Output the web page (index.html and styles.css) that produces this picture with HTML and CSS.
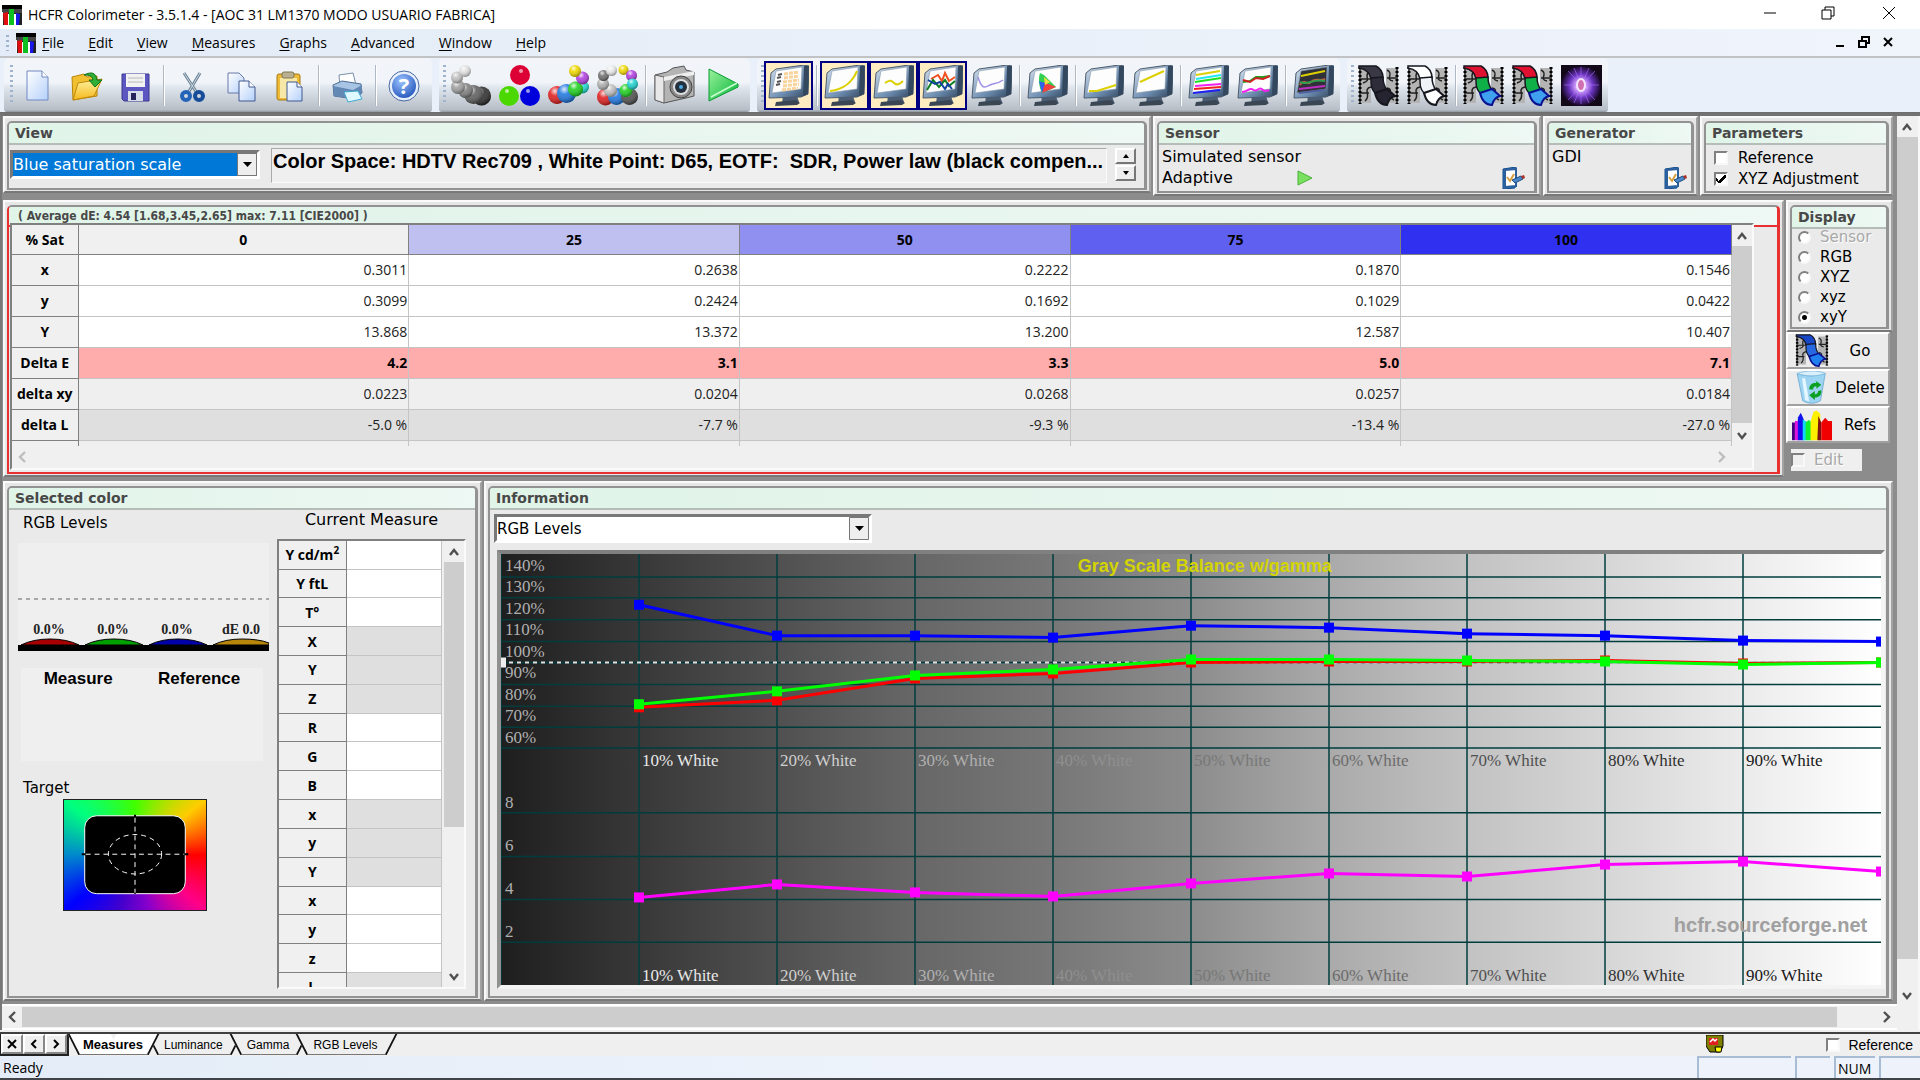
FILE: index.html
```html
<!DOCTYPE html>
<html lang="en">
<head>
<meta charset="utf-8">
<title>HCFR Colorimeter - 3.5.1.4</title>
<link rel="stylesheet" href="styles.css">
</head>
<body>
<svg class="defs" aria-hidden="true">
  <defs>
    <linearGradient id="g-bezel" x1="0" y1="0" x2="1" y2="1"><stop offset="0" stop-color="#dbe6f2"/><stop offset=".6" stop-color="#6f8fb3"/><stop offset="1" stop-color="#2c4159"/></linearGradient>
    <linearGradient id="g-paper" x1="0" y1="0" x2="1" y2="1"><stop offset="0" stop-color="#fff"/><stop offset="1" stop-color="#b4d0fa"/></linearGradient>
    <linearGradient id="g-folder" x1="0" y1="0" x2="0" y2="1"><stop offset="0" stop-color="#fff3a0"/><stop offset="1" stop-color="#f5b81c"/></linearGradient>
    <linearGradient id="g-green" x1="0" y1="0" x2="1" y2="1"><stop offset="0" stop-color="#9af29a"/><stop offset="1" stop-color="#05b53a"/></linearGradient>
    <radialGradient id="g-help" cx=".4" cy=".3" r=".8"><stop offset="0" stop-color="#9cc4ff"/><stop offset="1" stop-color="#1d4fb8"/></radialGradient>
    <radialGradient id="g-shine" cx=".38" cy=".28" r=".7"><stop offset="0" stop-color="#fff" stop-opacity=".85"/><stop offset=".4" stop-color="#fff" stop-opacity=".1"/><stop offset="1" stop-color="#000" stop-opacity=".35"/></radialGradient>
    <radialGradient id="g-nova"><stop offset="0" stop-color="#fff"/><stop offset=".25" stop-color="#d8a8ff"/><stop offset=".6" stop-color="#6a34c0"/><stop offset="1" stop-color="#160824"/></radialGradient>
    <symbol id="logo" viewBox="0 0 20 20"><path fill="#000" d="M0 0h20v8H0z"/><path fill="#444" d="M0 4h20v4H0z"/><path fill="#222" d="M0 8h20v12H0z"/><path fill="#fff" d="M0 7h1v13H0zM6 9h1v11H6zM12 9h2v11h-2z"/><path fill="#e01010" d="M1 8l5-1v13H2z"/><path fill="#10c020" d="M7 4h5v16H7z"/><path fill="#1818e8" d="M14 8l4 1-1 11h-3z"/></symbol>
    <symbol id="ball" viewBox="0 0 20 20"><circle cx="10" cy="10" r="10" fill="currentColor"/><circle cx="10" cy="10" r="10" fill="url(#g-shine)"/></symbol>
    <symbol id="monitor" viewBox="0 0 41 41">
      <path d="M15 31h14l2 6-17 1z" fill="#4b5e75"/><path d="M8 37l20-2 4 3-3 2-22 1z" fill="#3a4654"/>
      <path d="M8 4L36 0l5 1-1 28-7 3-32 1L3 8z" fill="url(#g-bezel)" stroke="#4e5c6c" stroke-width="1"/>
      <path d="M36 1l5 0-1 28-5 2z" fill="#33485f"/>
      <path d="M8 6l26-4-1 22-29 4z" fill="var(--screen,#fdfdfd)" stroke="#8899aa" stroke-width=".6"/>
    </symbol>
    <symbol id="film" viewBox="0 0 41 41">
      <path d="M1 3h12v35H1zM28 3h12v35H28z" fill="#b4b4b4"/>
      <path d="M2 2v37M39 2v37M12 6c-8 5 3 9-7 12M13 22c-9 2 1 9-6 14M29 5c8 4-3 9 6 11M29 23c8 1-2 8 7 12M3 14h9M3 28h8M29 13h9M30 31h8" stroke="#222" stroke-width="1.5" fill="none"/>
      <path d="M2 2v37M39 2v37" stroke="#000" stroke-width="3" stroke-dasharray="2 2"/>
      <path d="M1 1h17c6 3 7 7 7 12l-12 1C12 7 7 4 1 3z" fill="var(--a)" stroke="#16161e" stroke-width="1.5"/>
      <path d="M13 13l12-1c0 6 1 9 4 13l-12 3c-4-4-4-8-4-15z" fill="var(--b)" stroke="#16161e" stroke-width="1.5"/>
      <path d="M17 28l12-4 8 7c-4 1-7 5-8 9-6 0-10-4-12-12z" fill="var(--c)" stroke="var(--edge,#16161e)" stroke-width="2"/>
    </symbol>
    <symbol id="edit-page" viewBox="0 0 24 22"><path d="M2 2l13-2v4h-9l-1 13 9 1v3L2 22z" fill="#2d74c4" stroke="#174a86"/><path d="M4 3l11-1v17L4 20z" fill="#fff" stroke="#2d5f9c" stroke-width="2"/><path d="M6 10l3 4 4-7" stroke="#d8a040" stroke-width="2" fill="none"/><path d="M11 13l9-4 2 3-8 4z" fill="#4b86c8" stroke="#204c80"/><path d="M20 9l3-1 1 3-2 1z" fill="#b03020"/></symbol>
    <symbol id="up" viewBox="0 0 12 12"><path d="M2 9l4-5 4 5" fill="none" stroke="currentColor" stroke-width="2.4"/></symbol>
    <symbol id="down" viewBox="0 0 12 12"><path d="M2 3l4 5 4-5" fill="none" stroke="currentColor" stroke-width="2.4"/></symbol>
    <symbol id="left" viewBox="0 0 12 12"><path d="M9 1L4 6l5 5" fill="none" stroke="currentColor" stroke-width="2.4"/></symbol>
    <symbol id="right" viewBox="0 0 12 12"><path d="M3 1l5 5-5 5" fill="none" stroke="currentColor" stroke-width="2.4"/></symbol>
  </defs>
</svg>

<header class="titlebar">
  <svg class="logo"><use href="#logo"/></svg>
  <h1>HCFR Colorimeter - 3.5.1.4 - [AOC 31 LM1370 MODO USUARIO FABRICA]</h1>
  <div class="window-buttons">
    <button aria-label="Minimize"><svg viewBox="0 0 14 14"><path d="M1 7h12"/></svg></button>
    <button aria-label="Restore"><svg viewBox="0 0 14 14"><path d="M1 4h9v9H1zM4 4V1h9v9h-3"/></svg></button>
    <button aria-label="Close"><svg viewBox="0 0 14 14"><path d="M1 1l12 12M13 1L1 13"/></svg></button>
  </div>
</header>

<nav class="menubar">
  <span class="grip"></span>
  <svg class="logo"><use href="#logo"/></svg>
  <button><u>F</u>ile</button><button><u>E</u>dit</button><button><u>V</u>iew</button><button><u>M</u>easures</button><button><u>G</u>raphs</button><button><u>A</u>dvanced</button><button><u>W</u>indow</button><button><u>H</u>elp</button>
  <div class="document-buttons">
    <button aria-label="Minimize document"><svg viewBox="0 0 12 12"><path d="M2 10h8"/></svg></button>
    <button aria-label="Restore document"><svg viewBox="0 0 12 12"><path d="M1 5h7v6H1zM4 4V1h7v6H9"/></svg></button>
    <button aria-label="Close document"><svg viewBox="0 0 12 12"><path d="M2 2l8 8M10 2l-8 8"/></svg></button>
  </div>
</nav>

<div class="toolbar">
  <div class="band">
    <span class="grip"></span>
    <button aria-label="New"><svg viewBox="0 0 41 41"><path d="M10 6h15l6 6v23H10z" fill="url(#g-paper)" stroke="#7088c0"/><path d="M25 6v6h6" fill="#fff" stroke="#7088c0"/></svg></button>
    <button aria-label="Open"><svg viewBox="0 0 41 41"><path d="M6 12l12-3 3 3 10-1v20L7 35z" fill="#f0c030" stroke="#b88408"/><path d="M7 35l5-17 24-4-8 17z" fill="url(#g-folder)" stroke="#c08808"/><path d="M18 10c8-4 12-2 13 5h5l-7 7-6-7h4c-1-4-3-5-9-5z" fill="#2fae38" stroke="#127018"/></svg></button>
    <button aria-label="Save"><svg viewBox="0 0 41 41"><path d="M7 9h27v27H9l-2-2z" fill="#5b56c0" stroke="#3c3890"/><path d="M11 9h19v13H11z" fill="#f2f2f2"/><path d="M13 13h15M13 17h15" stroke="#b8b8b8"/><path d="M13 26h15v10H13z" fill="#d8dce8"/><path d="M16 28h5v7h-5z" fill="#27245c"/></svg></button>
    <span class="sep"></span>
    <button aria-label="Cut"><svg viewBox="0 0 41 41"><path d="M12 8l13 20M28 8L16 28" stroke="#6e8496" stroke-width="3"/><path d="M12 8l13 20M28 8L16 28" stroke="#c8d8e4" stroke-width="1"/><ellipse cx="14" cy="31" rx="4" ry="4" fill="none" stroke="#2464b8" stroke-width="4"/><ellipse cx="27" cy="31" rx="4" ry="4" fill="none" stroke="#174c98" stroke-width="4"/></svg></button>
    <button aria-label="Copy"><svg viewBox="0 0 41 41"><path d="M7 8h11l5 5v15H7z" fill="url(#g-paper)" stroke="#6878a8"/><path d="M18 16h10l6 6v14H18z" fill="url(#g-paper)" stroke="#405890"/><path d="M28 16v6h6" fill="#fff" stroke="#405890"/></svg></button>
    <button aria-label="Paste"><svg viewBox="0 0 41 41"><rect x="7" y="9" width="23" height="26" rx="2" fill="#eebc38" stroke="#a87810"/><path d="M10 13h17v20H10z" fill="#f8e8a8"/><rect x="12" y="7" width="12" height="6" rx="2" fill="#b8b090" stroke="#807850"/><path d="M17 17h10l5 5v14H17z" fill="url(#g-paper)" stroke="#405890"/><path d="M27 17v5h5" fill="#fff" stroke="#405890"/></svg></button>
    <span class="sep"></span>
    <button aria-label="Print"><svg viewBox="0 0 41 41"><path d="M12 10l14-2 3 12-16 2z" fill="#fff" stroke="#7890a8"/><path d="M6 20l9-4 19 3 1 9-8 6-20-3z" fill="#a8c4e4" stroke="#4c6c94"/><path d="M6 21l20 4 9-5v8l-8 6-20-3z" fill="#6488b4"/><path d="M17 27l14-1 4 8-14 3z" fill="#e0f8ff" stroke="#40a8d0"/></svg></button>
    <span class="sep"></span>
    <button aria-label="Help"><svg viewBox="0 0 41 41"><circle cx="20" cy="21" r="15" fill="#e8f0fc" stroke="#4868a0"/><circle cx="20" cy="21" r="12" fill="url(#g-help)"/><text x="20" y="29" class="help-mark">?</text></svg></button>
  </div>
  <div class="band">
    <span class="grip"></span>
    <button aria-label="Measure gray scale"><svg viewBox="0 0 41 41"><g color="#303030"><use href="#ball" x="22" y="21" width="19" height="20"/></g><g color="#606060"><use href="#ball" x="14" y="20" width="19" height="19"/></g><g color="#808080"><use href="#ball" x="8" y="18" width="15" height="15"/></g><g color="#a0a0a0"><use href="#ball" x="1" y="15" width="14" height="14"/></g><g color="#c0c0c0"><use href="#ball" x="1" y="6" width="12" height="13"/></g><g color="#e0e0e0"><use href="#ball" x="9" y="0" width="12" height="12"/></g></svg></button>
    <button aria-label="Measure primaries"><svg viewBox="0 0 41 41"><circle cx="21" cy="10" r="10" fill="#dc0034"/><circle cx="10" cy="31" r="10" fill="#4ad800"/><circle cx="31" cy="31" r="10" fill="#0000dc"/><g fill="#fff" opacity=".6"><circle cx="22" cy="6" r="2"/><circle cx="8" cy="26" r="2"/><circle cx="29" cy="26" r="2"/></g></svg></button>
    <button aria-label="Measure secondaries"><svg viewBox="0 0 41 41"><g color="#e02020"><use href="#ball" x="0" y="20" width="18" height="20"/></g><g color="#2078e0"><use href="#ball" x="9" y="19" width="19" height="19"/></g><g color="#20d8d0"><use href="#ball" x="28" y="15" width="13" height="14"/></g><g color="#20d020"><use href="#ball" x="20" y="16" width="15" height="16"/></g><g color="#b040e0"><use href="#ball" x="28" y="6" width="13" height="14"/></g><g color="#f0d800"><use href="#ball" x="21" y="0" width="12" height="12"/></g></svg></button>
    <button aria-label="Measure all"><svg viewBox="0 0 41 41"><g color="#e02020"><use href="#ball" x="0" y="23" width="17" height="18"/></g><g color="#2078e0"><use href="#ball" x="11" y="23" width="17" height="17"/></g><g color="#505050"><use href="#ball" x="24" y="22" width="17" height="19"/></g><g color="#c0c0c0"><use href="#ball" x="7" y="19" width="13" height="13"/></g><g color="#20d020"><use href="#ball" x="22" y="19" width="14" height="13"/></g><g color="#b0b0b0"><use href="#ball" x="0" y="13" width="12" height="12"/></g><g color="#707070"><use href="#ball" x="1" y="5" width="11" height="11"/></g><g color="#e8e8e8"><use href="#ball" x="9" y="0" width="11" height="11"/></g><g color="#f0d800"><use href="#ball" x="21" y="0" width="11" height="10"/></g><g color="#b040e0"><use href="#ball" x="29" y="5" width="11" height="11"/></g><g color="#20d0d0"><use href="#ball" x="30" y="13" width="11" height="12"/></g></svg></button>
    <span class="sep"></span>
    <button aria-label="Single measure"><svg viewBox="0 0 41 41"><path d="M1 10l12-3 6-4 11-2 2 4 8 2v24l-8 2-22 5-9-3z" fill="#b4b4b4" stroke="#555"/><path d="M1 10l9 2v26l-9-3z" fill="#e8e8e8" stroke="#666"/><path d="M10 12l30-6v4l-30 6z" fill="#eee"/><circle cx="27" cy="22" r="11" fill="#888" stroke="#444"/><circle cx="27" cy="22" r="8" fill="#ddd"/><circle cx="27" cy="22" r="6" fill="#23303e"/><circle cx="27" cy="22" r="2" fill="#4aa8e8"/></svg></button>
    <button aria-label="Continuous measure"><svg viewBox="0 0 41 41"><path d="M6 4l29 15v3L6 36z" fill="url(#g-green)" stroke="#0a9a34"/><path d="M8 32l26-14" stroke="#c8ffd0" stroke-width="1.5"/></svg></button>
  </div>
  <div class="band">
    <span class="grip"></span>
    <button class="pressed" aria-label="Measures view"><svg viewBox="0 0 41 41"><use href="#monitor"/><path d="M10 10l4-1M9 13l4-1M9 17l4-1M8 20l4-1" stroke="#555" stroke-width="2"/><path d="M16 9l15-2M16 13l15-2M15 17l16-2M15 21l16-2M14 25l16-2" stroke="#f8d49c" stroke-width="3" stroke-dasharray="4 1"/></svg></button>
    <span class="sep"></span>
    <button class="pressed" aria-label="Luminance"><svg viewBox="0 0 41 41"><use href="#monitor"/><path d="M6 26c14-2 22-8 27-20" class="trace yellow"/></svg></button>
    <button class="pressed" aria-label="Gamma"><svg viewBox="0 0 41 41"><use href="#monitor"/><path d="M12 18c5-4 7-2 9 0s5 2 9-2" class="trace yellow"/></svg></button>
    <button class="pressed" aria-label="RGB levels"><svg viewBox="0 0 41 41"><use href="#monitor"/><path d="M9 14l7-4 4 6 3-8 4 8 6-4" class="trace" stroke="#f05020"/><path d="M5 25l6-10 6 7 6-7 4 6 6-5" class="trace" stroke="#108020"/><path d="M6 15l7 4 5-2 5 7 3-5 4 5" class="trace" stroke="#1040a0"/></svg></button>
    <button aria-label="Color temperature"><svg viewBox="0 0 41 41"><use href="#monitor"/><path d="M7 12c4 14 8 10 12 8s8-1 13-5" stroke="#a090e8" fill="none" stroke-width="1.5"/></svg></button>
    <span class="sep"></span>
    <button aria-label="CIE chart"><svg viewBox="0 0 41 41"><use href="#monitor"/><path d="M13 8l4 2 12 12-14 6c-3-6-4-14-2-20z" fill="#30d050"/><path d="M17 17l12 5-14 6z" fill="#f04040"/><path d="M12 16l6 2-3 10z" fill="#3060f0"/><path d="M17 12l6 5-5 3z" fill="#f0e040"/></svg></button>
    <span class="sep"></span>
    <button aria-label="Near black"><svg viewBox="0 0 41 41"><use href="#monitor"/><path d="M6 26h8l19-6" class="trace yellow"/></svg></button>
    <button aria-label="Near white"><svg viewBox="0 0 41 41"><use href="#monitor"/><path d="M8 17l24-11" class="trace yellow"/></svg></button>
    <span class="sep"></span>
    <button aria-label="Saturation luminance"><svg viewBox="0 0 41 41"><use href="#monitor"/><path d="M8 10l24-4" class="trace yellow"/><path d="M8 14l25-4" class="trace" stroke="#20e8f0"/><path d="M7 17l26-4" class="trace" stroke="#20e020"/><path d="M7 21l26-2" class="trace" stroke="#f020f0"/><path d="M6 24l27-2" class="trace" stroke="#f02020"/><path d="M5 28l27-3" class="trace" stroke="#2020f0"/></svg></button>
    <button aria-label="Saturation shift"><svg viewBox="0 0 41 41"><use href="#monitor"/><path d="M6 17l7-1 6-4h7l7-1" class="trace" stroke="#20a020"/><path d="M6 15l7 2 6-4 7 1 7-3" class="trace" stroke="#d02020"/><path d="M5 27c5 0 6-3 9-3s3 3 6 1 4-2 6 0 4 1 6 0" class="trace" stroke="#f020f0"/></svg></button>
    <span class="sep"></span>
    <button aria-label="Combined measures"><svg viewBox="0 0 41 41" class="dark-screen"><use href="#monitor"/><path d="M8 11l24-5" class="trace yellow"/><path d="M7 20c5-8 7 2 11-3s8 0 14-3" class="trace" stroke="#c06040"/><path d="M7 17c8 4 12-4 25-1" class="trace" stroke="#30a050"/><path d="M6 24l26-3" class="trace" stroke="#c030c0"/><path d="M6 28l25-3" class="trace" stroke="#5060a0"/></svg></button>
  </div>
  <div class="band">
    <span class="grip"></span>
    <button aria-label="Black film"><svg class="film-dark"><use href="#film"/></svg></button>
    <button aria-label="White film"><svg class="film-white"><use href="#film"/></svg></button>
    <span class="sep"></span>
    <button aria-label="Color film"><svg class="film-color"><use href="#film"/></svg></button>
    <button aria-label="Color film reference"><svg class="film-color"><use href="#film"/></svg></button>
    <button aria-label="Full screen"><svg viewBox="0 0 41 41"><path fill="#120818" d="M0 0h41v41H0z"/><circle cx="20" cy="21" r="20" fill="url(#g-nova)"/><path d="M20 2v37M3 20h35M7 6l27 29M34 6L7 35M13 3l15 35M28 3L13 38" stroke="#b070ff" stroke-width="1" opacity=".6"/><ellipse cx="20" cy="20" rx="4" ry="6" fill="#d070b0" stroke="#f4e4ff" stroke-width="2"/></svg></button>
  </div>
</div>

<main class="workspace">
  <div class="panes">
    <div class="row">
      <section class="panel view-panel"><div class="group">
        <h2>View</h2>
        <div class="view-body">
          <select class="combo selected" aria-label="View"><option>Blue saturation scale</option></select>
          <p class="summary">Color Space: HDTV Rec709 , White Point: D65, EOTF: &nbsp;SDR, Power law (black compen...</p>
          <div class="spin"><button aria-label="Previous"><svg viewBox="0 0 8 6"><path d="M4 1l3 4H1z"/></svg></button><button aria-label="Next"><svg viewBox="0 0 8 6"><path d="M4 5l3-4H1z"/></svg></button></div>
        </div>
      </div></section>
      <section class="panel sensor-panel"><div class="group">
        <h2>Sensor</h2>
        <div class="device-body">
          <p>Simulated sensor</p>
          <div class="device-line"><span class="mode">Adaptive</span><svg class="run" viewBox="0 0 16 16"><path d="M1 1l14 7-14 7z"/></svg><button aria-label="Configure sensor"><svg class="page"><use href="#edit-page"/></svg></button></div>
        </div>
      </div></section>
      <section class="panel generator-panel"><div class="group">
        <h2>Generator</h2>
        <div class="device-body">
          <p>GDI</p>
          <div class="device-line"><button aria-label="Configure generator"><svg class="page"><use href="#edit-page"/></svg></button></div>
        </div>
      </div></section>
      <section class="panel parameters-panel"><div class="group">
        <h2>Parameters</h2>
        <div class="checks">
          <label><input type="checkbox"><span>Reference</span></label>
          <label><input type="checkbox" checked><span>XYZ Adjustment</span></label>
        </div>
      </div></section>
    </div>

    <div class="row">
      <section class="panel data-panel"><div class="group">
        <h2>( Average dE: 4.54 [1.68,3.45,2.65] max: 7.11 [CIE2000] )</h2>
        <div class="grid-box">
          <div class="grid-view">
            <div class="grid-clip">
            <table class="data">
              <thead><tr><th scope="col">% Sat</th><th scope="col">0</th><th scope="col" class="s25">25</th><th scope="col" class="s50">50</th><th scope="col" class="s75">75</th><th scope="col" class="s100">100</th></tr></thead>
              <tbody>
                <tr><th scope="row">x</th><td>0.3011</td><td>0.2638</td><td>0.2222</td><td>0.1870</td><td>0.1546</td></tr>
                <tr><th scope="row">y</th><td>0.3099</td><td>0.2424</td><td>0.1692</td><td>0.1029</td><td>0.0422</td></tr>
                <tr><th scope="row">Y</th><td>13.868</td><td>13.372</td><td>13.200</td><td>12.587</td><td>10.407</td></tr>
                <tr class="delta-e"><th scope="row">Delta E</th><td>4.2</td><td>3.1</td><td>3.3</td><td>5.0</td><td>7.1</td></tr>
                <tr class="light"><th scope="row">delta xy</th><td>0.0223</td><td>0.0204</td><td>0.0268</td><td>0.0257</td><td>0.0184</td></tr>
                <tr class="shade"><th scope="row">delta L</th><td>-5.0 %</td><td>-7.7 %</td><td>-9.3 %</td><td>-13.4 %</td><td>-27.0 %</td></tr>
                <tr class="light"><th></th><td></td><td></td><td></td><td></td><td></td></tr>
              </tbody>
            </table>
            </div>
            <div class="vscroll"><button aria-label="Scroll up"><svg><use href="#up"/></svg></button><span class="thumb"></span><button aria-label="Scroll down"><svg><use href="#down"/></svg></button></div>
          </div>
          <div class="hscroll idle"><button aria-label="Scroll left"><svg><use href="#left"/></svg></button><span class="track"></span><button aria-label="Scroll right"><svg><use href="#right"/></svg></button></div>
        </div>
      </div></section>
      <aside class="side">
        <section class="panel display-panel"><div class="group">
          <h2>Display</h2>
          <div class="radios">
            <label class="disabled"><input type="radio" name="display" disabled><span>Sensor</span></label>
            <label><input type="radio" name="display"><span>RGB</span></label>
            <label><input type="radio" name="display"><span>XYZ</span></label>
            <label><input type="radio" name="display"><span>xyz</span></label>
            <label><input type="radio" name="display" checked><span>xyY</span></label>
          </div>
        </div></section>
        <button class="action"><svg class="film-blue"><use href="#film"/></svg><span>Go</span></button>
        <button class="action"><svg viewBox="0 0 41 41"><path d="M2 3c10 4 22 4 35 0l-6 34c-7 4-15 4-22 0z" fill="#9cd4f2" stroke="#68a8d0"/><path d="M2 3c12-4 26-4 35 0-10 4-24 4-35 0z" fill="#d8f0fc" stroke="#7cb8dc"/><path d="M8 9l4 27 5 2L12 9z" fill="#e4f6ff"/><path d="M17 23c0-6 4-9 9-8l-1-3 7 5-6 5v-3c-3 0-4 1-4 4zM32 24c1 6-3 9-8 9v3l-7-6 7-5v4c3 0 4-2 4-4z" fill="#0ca020"/></svg><span>Delete</span></button>
        <button class="action"><svg viewBox="0 0 41 41" preserveAspectRatio="none"><path d="M0 18h3v22H0z" fill="#400080"/><path d="M3 16h4v24H3z" fill="#e010e0"/><path d="M6 12l3-6 3 8v26H6z" fill="#1010f0"/><path d="M11 14l4 3v23h-4z" fill="#10d8f0"/><path d="M14 18l3-3 3 2v23h-6z" fill="#10f030"/><path d="M19 17l3-12 3-2 4 4v33H19z" fill="#fff000"/><path d="M27 10l3 8v22h-4z" fill="#801010"/><path d="M30 18l4-6 3 4h4v24H30z" fill="#f00000"/></svg><span>Refs</span></button>
        <label class="edit"><input type="checkbox" disabled><span>Edit</span></label>
      </aside>
    </div>

    <div class="row grow">
      <section class="panel color-panel"><div class="group">
        <h2>Selected color</h2>
        <div class="color-body">
          <div class="color-left">
            <h3>RGB Levels</h3>
            <svg class="levels" viewBox="0 0 251 108">
              <path d="M0 56h251" stroke="#a8a8a8" stroke-width="2" stroke-dasharray="4 4"/>
              <g stroke="#000"><path d="M3 102q12-6 29-6t29 6z" fill="#a80000"/><path d="M67 102q12-6 29-6t29 6z" fill="#00a000"/><path d="M131 102q12-6 29-6t29 6z" fill="#0000a8"/><path d="M195 102q12-6 29-6t27 4v2z" fill="#b8860b"/></g>
              <path d="M0 102h251v6H0z"/>
              <text x="31" y="91">0.0%</text><text x="95" y="91">0.0%</text><text x="159" y="91">0.0%</text><text x="223" y="91">dE 0.0</text>
            </svg>
            <div class="compare"><strong>Measure</strong><strong>Reference</strong></div>
            <h3 class="target-title">Target</h3>
            <div class="target"><svg viewBox="0 0 144 111"><rect x="21" y="16" width="102" height="79" rx="12" fill="#000" stroke="#fff" stroke-width="1"/><path d="M18 55h108M72 15v80" stroke="#000" stroke-width="2"/><path d="M22 55h100M72 18v76" stroke="#fff" stroke-dasharray="5 4"/><ellipse cx="72" cy="55" rx="27" ry="20" fill="none" stroke="#fff" stroke-dasharray="5 4"/></svg></div>
          </div>
          <div class="color-right">
            <h3>Current Measure</h3>
            <div class="measure-box">
              <table class="measure">
                <tr><th scope="row">Y cd/m<sup>2</sup></th><td></td></tr><tr><th scope="row">Y ftL</th><td></td></tr><tr><th scope="row">T°</th><td></td></tr>
                <tr class="shade"><th scope="row">X</th><td></td></tr><tr class="shade"><th scope="row">Y</th><td></td></tr><tr class="shade"><th scope="row">Z</th><td></td></tr>
                <tr><th scope="row">R</th><td></td></tr><tr><th scope="row">G</th><td></td></tr><tr><th scope="row">B</th><td></td></tr>
                <tr class="shade"><th scope="row">x</th><td></td></tr><tr class="shade"><th scope="row">y</th><td></td></tr><tr class="shade"><th scope="row">Y</th><td></td></tr>
                <tr><th scope="row">x</th><td></td></tr><tr><th scope="row">y</th><td></td></tr><tr><th scope="row">z</th><td></td></tr>
                <tr class="shade"><th scope="row">L</th><td></td></tr>
              </table>
              <div class="vscroll measure-scroll"><button aria-label="Scroll up"><svg><use href="#up"/></svg></button><span class="thumb"></span><button aria-label="Scroll down"><svg><use href="#down"/></svg></button></div>
            </div>
          </div>
        </div>
      </div></section>
      <section class="panel info-panel"><div class="group">
        <h2>Information</h2>
        <div class="info-body">
          <select class="combo info-combo" aria-label="Information"><option>RGB Levels</option></select>
          <div class="chart"><svg id="chart" role="img" aria-label="Gray Scale Balance w/gamma"></svg></div>
        </div>
      </div></section>
    </div>
    <div class="hscroll main-hscroll"><button aria-label="Scroll left"><svg><use href="#left"/></svg></button><span class="thumb"></span><button aria-label="Scroll right"><svg><use href="#right"/></svg></button></div>
  </div>
  <div class="vscroll main-vscroll"><button aria-label="Scroll up"><svg><use href="#up"/></svg></button><span class="thumb"></span><button aria-label="Scroll down"><svg><use href="#down"/></svg></button></div>
</main>

<div class="tabbar">
  <div class="tab-nav"><button aria-label="Close tab"><svg viewBox="0 0 12 12"><path d="M2 2l8 8M10 2l-8 8"/></svg></button><button aria-label="Previous tab"><svg viewBox="0 0 12 12"><path d="M8 2L4 6l4 4"/></svg></button><button aria-label="Next tab"><svg viewBox="0 0 12 12"><path d="M4 2l4 4-4 4"/></svg></button></div>
  <div class="tabs">
    <button class="tab active"><span>Measures</span></button><button class="tab"><span>Luminance</span></button><button class="tab"><span>Gamma</span></button><button class="tab"><span>RGB Levels</span></button>
  </div>
  <svg class="plug" viewBox="0 0 18 18"><path d="M0 0h17v11l-3 6H4l-4-6z" fill="#808000" stroke="#000"/><path d="M3 3h9v7H3z" fill="#e02020"/><path d="M4 7l3-3 2 2 2-2" stroke="#fff" fill="none" stroke-width="1.5"/><path d="M9 12h7l-1 5h-5z" fill="#ffff00" stroke="#000"/></svg>
  <label class="tab-check"><input type="checkbox"><span>Reference</span></label>
</div>
<footer class="statusbar"><span class="ready">Ready</span><span class="cell wide"></span><span class="cell small"></span><span class="cell num">NUM</span><span class="cell num"></span></footer>
<script src="script.js"></script>
</body>
</html>
```
FILE: styles.css
```css
* { box-sizing: border-box; }

body {
  margin: 0;
  min-height: 100vh;
  display: flex;
  flex-direction: column;
  background: #efefef;
  color: #000;
  font-family: "Open Sans", "Noto Sans", sans-serif;
  font-size: 14px;
}

h1, h2, h3, p { margin: 0; font-weight: normal; }
button { padding: 0; border: 0; background: none; color: inherit; font: inherit; }
.defs { position: absolute; width: 0; height: 0; }

/* Title bar and menu */
.titlebar { display: flex; align-items: center; height: 29px; padding-left: 2px; background: #fff; }
.titlebar h1 { margin-left: 6px; font-size: 14px; }
.logo { width: 20px; height: 20px; }
.window-buttons { display: flex; margin-left: auto; }
.window-buttons button { width: 58px; height: 28px; }
.window-buttons button:last-child { width: 63px; }
.window-buttons svg { width: 14px; height: 14px; fill: none; stroke: #000; }
.menubar { display: flex; align-items: center; height: 29px; padding-left: 6px; background: linear-gradient(90deg, #e3ecf7, #f0f4fb); border-bottom: 2px solid #c0c2c4; }
.menubar > button { margin-right: 24px; }
.menubar .logo { margin: 0 6px 0 7px; }
.menubar u { text-underline-offset: 2px; }
.document-buttons { display: flex; margin-left: auto; padding-right: 20px; }
.document-buttons button { width: 24px; height: 24px; }
.document-buttons svg { width: 12px; height: 12px; fill: none; stroke: #000; stroke-width: 2; }
.grip { width: 3px; height: 16px; background: repeating-linear-gradient(#9fb4cc 0 2px, transparent 2px 5px); }

/* Toolbar */
.toolbar { display: flex; gap: 7px; height: 55px; padding-left: 4px; background: #e9f0fa; border-bottom: 1px solid #6e6e6e; }
.band { display: flex; align-items: center; padding: 0 2px 0 4px; border-radius: 5px 5px 3px 3px; background: linear-gradient(#f1f5fa 0 45%, #dfe5ec 55%, #b7bec7 96%, #8f979f); }
.band:first-child { padding: 0 3px 0 6px; }
.band .grip { height: 40px; }
.band button { display: flex; align-items: center; justify-content: center; width: 49px; height: 49px; }
.band svg { width: 41px; height: 41px; }
.band .sep { width: 2px; height: 41px; margin: 0 3px; background: linear-gradient(90deg, #b0b8c4 50%, #fff 50%); }
.band:nth-child(n+3) .sep { margin: 0 2px 0 3px; }
.band .pressed { border: 2px solid #000080; background: #ffecc0; }
.help-mark { font: bold 22px "Open Sans", sans-serif; fill: #fff; text-anchor: middle; }
.trace { fill: none; stroke-width: 2; }
.yellow { stroke: #dcd000; }
.dark-screen { --screen: #303038; }
.film-dark { --a: #3a3844; --b: #2e2c38; --c: #262430; }
.film-white { --a: #fff; --b: #f0f4f8; --c: #fff; }
.film-color { --a: #e01030; --b: #10b048; --c: #40a0f0; --edge: #0a1090; }
.film-blue { --a: #1848c8; --b: #2868e0; --c: #2080f0; --edge: #0a1090; }

/* Workspace */
.workspace { flex: 1; display: flex; background: #8c8c8c; border-top: 3px solid #727272; border-left: 2px solid #787878; }
.panes { flex: 1; display: flex; flex-direction: column; gap: 4px; min-width: 0; }
.row { display: flex; gap: 2px; padding: 0 4px 0 1px; }
.grow { flex: 1; }
.panel { display: flex; padding: 3px 2px 1px; background: #e6e6e6; border: 2px solid #fafafa; border-right-color: #a2a2a2; border-bottom-color: #787878; }
.group { flex: 1; display: flex; flex-direction: column; min-width: 0; background: #eaeaea; border: 2px solid #929292; border-right-width: 3px; border-radius: 5px 5px 0 0; }
h2 { height: 22px; padding: 0 6px; border-bottom: 2px solid #b6bcb8; border-radius: 3px 3px 0 0; background: linear-gradient(90deg, #e0f4e8, #eef8f4); color: #484848; font: bold 14px/21px "DejaVu Sans", sans-serif; }
h3, .device-body, .combo, .checks, .radios, .action, .edit { font-family: "DejaVu Sans", sans-serif; }

/* Top row */
.view-panel { flex: 1; height: 77px; min-width: 0; }
.sensor-panel { width: 388px; }
.generator-panel { width: 155px; }
.parameters-panel { width: 193px; }
.view-body { display: flex; align-items: flex-start; padding: 3px 8px 0 1px; }
.combo { width: 250px; height: 29px; padding: 0; border: 3px solid; border-color: #787878 #fff #fff #787878; border-radius: 0; background: #fff; font-size: 16px; appearance: none; }
.combo { background: url("data:image/svg+xml,%3Csvg xmlns='http://www.w3.org/2000/svg' width='20' height='23'%3E%3Cpath fill='%23eee' stroke='%23777' d='M.5.5h19v22H.5z'/%3E%3Cpath d='M6 9h9l-4.500 5z'/%3E%3C/svg%3E") right center no-repeat #fff; }
.combo.selected { margin-top: 2px; background-color: #0078d7; color: #fff; }
.summary { flex: 1; height: 35px; min-width: 0; margin: 0 8px 0 11px; padding-left: 1px; overflow: hidden; white-space: nowrap; border: 1px solid #fafafa; border-top-color: #aaa; border-left-color: #aaa; background: #efefef; font: bold 20px/24px "Liberation Sans", Arial, sans-serif; }
.spin { display: flex; flex-direction: column; gap: 1px; }
.spin button { display: flex; align-items: center; justify-content: center; width: 21px; height: 16px; border: 2px solid; border-color: #fff #777 #777 #fff; background: #eee; }
.spin svg { width: 8px; height: 6px; }
.device-body { flex: 1; display: flex; flex-direction: column; padding: 2px 9px 0 3px; font-size: 16px; line-height: 20px; }
.generator-panel .device-body { padding-right: 4px; }
.device-line { display: flex; align-items: center; height: 22px; }
.device-line button { margin-left: auto; height: 22px; }
.mode { width: 135px; }
.run { width: 16px; height: 16px; fill: #7ae060; stroke: #48b038; }
.page { width: 24px; height: 22px; }
.checks { display: flex; flex-direction: column; padding: 2px 8px; font-size: 15px; }
label { display: flex; align-items: center; }
.checks label { height: 21px; gap: 10px; }
input { margin: 0; flex: none; appearance: none; width: 14px; height: 14px; background: #fff; border: 2px solid; border-color: #808080 #f8f8f8 #f8f8f8 #808080; }
input[type="checkbox"]:checked { background: linear-gradient(45deg, transparent 30%, #000 30% 50%, transparent 50%) 0 4px / 5px 5px no-repeat, linear-gradient(-45deg, transparent 36%, #000 36% 62%, transparent 62%) 2px 1px / 8px 8px no-repeat, #fff; }

/* Data grid */
.data-panel { flex: 1; height: 277px; min-width: 0; }
.data-panel .group { border-color: #929292 #e83030 #e83030; }
.data-panel h2 { border-bottom-color: #e83030; padding-left: 9px; font: bold 12px/18px "DejaVu Sans Condensed", "DejaVu Sans", sans-serif; }
.grid-box { flex: 1; display: flex; flex-direction: column; margin: -4px 23px 3px 1px; border: 2px solid; border-color: #808080 #fafafa #fafafa #808080; background: #efefef; }
.grid-view { display: flex; height: 221px; }
.grid-clip { flex: 1; height: 221px; overflow: hidden; }
table { border-collapse: collapse; }
.data { width: 100%; table-layout: fixed; }
.data th, .data td { padding: 0 1px; border: 1px solid #c4c4c4; border-left: 0; text-align: right; }
.data tr > th { background: #f0f0f0; border-color: #808080; border-top: 0; text-align: center; }
.data tr > th:first-child { width: 66px; }
.data tr { height: 31px; }
.data thead tr { height: 29px; }
.data td { background: #fff; color: #222; }
.data .s25 { background: #c0c0f0; }
.data .s50 { background: #9090f0; }
.data .s75 { background: #6060f0; }
.data .s100 { background: #3030f0; }
.data .delta-e td { background: #ffacac; font-weight: bold; color: #000; }
.data .light td { background: #efefef; }
.data .shade td, .measure .shade td { background: #dfdfdf; }

/* Scroll bars */
.vscroll { display: flex; flex-direction: column; width: 20px; background: #f0f0f0; }
.vscroll .thumb { flex: 1; margin-bottom: 2px; background: #cdcdcd; }
.vscroll button, .hscroll button { display: flex; align-items: center; justify-content: center; width: 20px; height: 21px; color: #505050; }
.vscroll svg, .hscroll svg { width: 12px; height: 12px; }
.hscroll { display: flex; align-items: center; height: 22px; background: #f0f0f0; }
.hscroll .track { flex: 1; }
.idle button { color: #bdbdbd; }
.idle { padding-right: 20px; }
.main-hscroll { height: 26px; border-top: 2px solid #fff; border-bottom: 2px solid #fff; margin-top: -1px; }
.main-hscroll .thumb { flex: 1; height: 20px; margin-right: 40px; background: #cdcdcd; }
.main-vscroll { width: 23px; border-right: 2px solid #f8f8f8; }
.main-vscroll .thumb { margin-bottom: 26px; }
.main-vscroll button:last-child { margin-bottom: 24px; }

/* Side column */
.side { display: flex; flex-direction: column; width: 107px; }
.display-panel { height: 132px; }
.radios { display: flex; flex-direction: column; margin-top: -2px; padding-left: 6px; font-size: 15px; }
.radios label { height: 20px; gap: 9px; }
.radios input { width: 13px; height: 13px; border-radius: 50%; }
.radios input:checked { background: radial-gradient(circle, #000 0 2px, #fff 3px); }
.disabled, .edit { color: #a8a8a8; text-shadow: 1px 1px #fff; }
.action { display: flex; align-items: center; width: 104px; height: 37px; padding-left: 4px; background: #ececec; border: 2px solid; border-color: #fff #a0a0a0 #a0a0a0 #fff; font-size: 15px; }
.action svg { width: 40px; height: 33px; flex: none; }
.action span { flex: 1; text-align: center; }
.edit { gap: 9px; width: 71px; height: 22px; margin: 6px 0 0 5px; background: #efefef; font-size: 15px; }
.edit input { background: #efefef; }

/* Selected color */
.color-panel { width: 479px; }
.color-body { flex: 1; display: flex; }
.color-left { width: 268px; padding-left: 9px; }
h3 { font-size: 15px; line-height: 20px; padding-left: 5px; }
.color-left > h3:first-child { margin-top: 3px; }
.levels { display: block; width: 251px; height: 108px; margin-top: 10px; background: #efefef; }
.levels text { font: bold 14px "Liberation Serif", serif; text-anchor: middle; fill: #222; }
.compare { display: flex; justify-content: space-around; width: 242px; height: 93px; margin: 17px 0 0 3px; background: #efefef; font: bold 17px/22px "Liberation Sans", Arial, sans-serif; }
.target-title { margin-top: 17px; }
.target { width: 144px; height: 112px; margin: 1px 0 0 45px; border: 1px solid #222; background: conic-gradient(from 90deg, #f00, #f08 38deg, #80c 75deg, #40c 105deg, #00f 142deg, #08c 180deg, #00ff80 218deg, #40ff00 270deg, #fc0 322deg, #f00); }
.target svg { display: block; width: 100%; }
.color-right { flex: 1; display: flex; flex-direction: column; padding: 0 9px 7px 0; }
.color-right h3 { font-size: 16px; padding: 0; margin: 0 0 9px; text-align: center; line-height: 20px; }
.measure-box { flex: 1 0 0; display: flex; gap: 2px; overflow: hidden; border: 2px solid; border-color: #808080 #fafafa #fafafa #808080; background: #efefef; }
.measure { flex: 1; height: 461px; }
.measure th { width: 67px; padding: 0; border: 1px solid #808080; border-top: 0; border-left: 0; background: #f0f0f0; }
.measure td { border: 1px solid #c4c4c4; border-top: 0; background: #fff; }
.measure sup { font-size: 10px; line-height: 0; }
.measure-scroll .thumb { flex: 0 0 265px; margin-bottom: auto; }

/* Information */
.info-panel { flex: 1; min-width: 0; }
.info-body { flex: 1; display: flex; flex-direction: column; padding: 4px 1px 7px 4px; }
.info-combo { width: 378px; height: 29px; font-size: 15px; }
.chart { flex: 1; min-height: 300px; margin: 7px 0 0 3px; border: 4px solid; border-color: #808080 #f4f4f4 #f4f4f4 #909090; background: linear-gradient(90deg, #1e1e1e, #383838 10%, #505050 20%, #676767 30%, #777 40%, #8c8c8c 50%, #aaa 60%, #c2c2c2 70%, #d6d6d6 80%, #ebebeb 90%, #fff); }
.chart svg { display: block; width: 100%; height: 100%; }
.chart .gridline { stroke: #003c3c; stroke-width: 1.5; }
.chart .reference { stroke: #e0e0e0; stroke-width: 2; stroke-dasharray: 4 4; }
.chart text { font: 17px "Liberation Serif", "Times New Roman", serif; fill: #b0b0b0; }
.chart .chart-title { font: bold 18px "Liberation Sans", Arial, sans-serif; fill: #d4d400; text-anchor: middle; }
.chart .credit { font: bold 20px "Liberation Sans", Arial, sans-serif; fill: #a0a0a0; text-anchor: end; }
.chart .series { stroke-width: 3; }

/* Tabs and status */
.tabbar { display: flex; height: 24px; margin-top: 2px; border-top: 2px solid #404040; background: #efefef; }
.tab-nav { display: flex; border-right: 2px solid #222; border-bottom: 2px solid #222; border-left: 1px solid #222; }
.tab-nav button { width: 22px; border: 2px solid; border-color: #fff #888 #888 #fff; }
.tab-nav svg { display: block; width: 12px; height: 12px; margin: auto; fill: none; stroke: #000; stroke-width: 2; }
.tabs { display: flex; padding-left: 4px; }
.tab { position: relative; height: 21px; padding: 0 14px 0 12px; margin-right: -2px; font: 12px "Liberation Sans", Arial, sans-serif; }
.tab::before, .tab::after { content: ""; position: absolute; top: 0; bottom: 0; width: 51%; border-bottom: 1px solid #777; background: #efefef; }
.tab::before { left: 0; transform: skewX(27deg); border-left: 2px solid #111; }
.tab::after { right: 0; transform: skewX(-27deg); border-right: 2px solid #111; }
.tab span { position: relative; z-index: 1; }
.tab.active { z-index: 1; padding: 0 11px 0 10px; font-size: 13px; font-weight: bold; }
.tab.active::before, .tab.active::after { background: #fff; }
.plug { width: 18px; height: 18px; margin: 1px 102px 0 auto; }
.tab-check { gap: 8px; padding-right: 7px; font: 14px "Liberation Sans", Arial, sans-serif; }
.statusbar { display: flex; gap: 4px; height: 24px; padding-left: 3px; border-bottom: 2px solid #404448; background: linear-gradient(90deg, #e3ecf7, #eef3fb 50%); line-height: 24px; }
.ready { margin-right: auto; }
.cell { border: 1px solid #a8bcd4; border-width: 2px 0 0 2px; padding-left: 2px; line-height: 21px; }
.wide { width: 94px; }
.small { width: 35px; }
.num { width: 41px; }
```
FILE: script.js
```javascript
const NS = "http://www.w3.org/2000/svg";
const chart = document.getElementById("chart");
const HEIGHT = 433;

function add(name, attributes, text) {
  const node = document.createElementNS(NS, name);
  for (const key in attributes) node.setAttribute(key, attributes[key]);
  if (text) node.textContent = text;
  chart.appendChild(node);
}
const pct = (y) => (y / HEIGHT * 100).toFixed(2) + "%";

// Grid
for (let i = 0; i < 10; i++) {
  add("line", { class: "gridline", x1: i * 10 + "%", x2: i * 10 + "%", y1: 0, y2: "100%" });
}
[23, 44, 66, 88, 109, 131, 153, 174, 195, 260, 304, 347, 390].forEach((y) => {
  add("line", { class: "gridline", x1: 0, x2: "100%", y1: pct(y), y2: pct(y) });
});
add("line", { class: "reference", x1: 0, x2: "100%", y1: pct(109), y2: pct(109) });
add("rect", { x: 0, y: pct(104), width: 5, height: 10, fill: "#eee" });

// Axis labels
for (let i = 0; i < 9; i++) {
  add("text", { x: 4, y: pct(17 + i * 21.6) }, 140 - i * 10 + "%");
}
[8, 6, 4, 2].forEach((value, i) => add("text", { x: 4, y: pct(255 + i * 43.3) }, String(value)));
const shades = ["#e8e8e8", "#d0d0d0", "#b0b0b0", "#8f8f8f", "#787878", "#6c6c6c", "#505050", "#303030", "#181818"];
shades.forEach((fill, i) => {
  [213, 429].forEach((y) => {
    add("text", { x: (i + 1) * 10 + "%", dx: 3, y: pct(y), style: "fill:" + fill }, (i + 1) * 10 + "% White");
  });
});
add("text", { class: "chart-title", x: "51%", y: pct(18) }, "Gray Scale Balance w/gamma");

// Measured series, 10% to 100% white
const series = [
  ["#0000ff", [51, 82, 82, 84, 72, 74, 80, 82, 87, 88]],
  ["#ff0000", [154, 147, 125, 120, 109, 108, 108, 107, 110, 109]],
  ["#00ff00", [151, 138, 122, 116, 106, 106, 107, 108, 111, 109]],
  ["#ff00ff", [345, 332, 340, 344, 331, 321, 324, 312, 309, 319]]
];
series.forEach(([color, values]) => {
  values.forEach((y, i) => {
    if (i) {
      add("line", { class: "series", stroke: color, x1: i * 10 + "%", x2: (i + 1) * 10 + "%", y1: pct(values[i - 1]), y2: pct(y) });
    }
    add("svg", { x: (i + 1) * 10 + "%", y: pct(y), overflow: "visible" });
    const marker = document.createElementNS(NS, "rect");
    marker.setAttribute("x", -5);
    marker.setAttribute("y", -5);
    marker.setAttribute("width", 10);
    marker.setAttribute("height", 10);
    marker.setAttribute("fill", color);
    chart.lastChild.appendChild(marker);
  });
});
add("text", { class: "credit", x: "99%", y: pct(380) }, "hcfr.sourceforge.net");
```
